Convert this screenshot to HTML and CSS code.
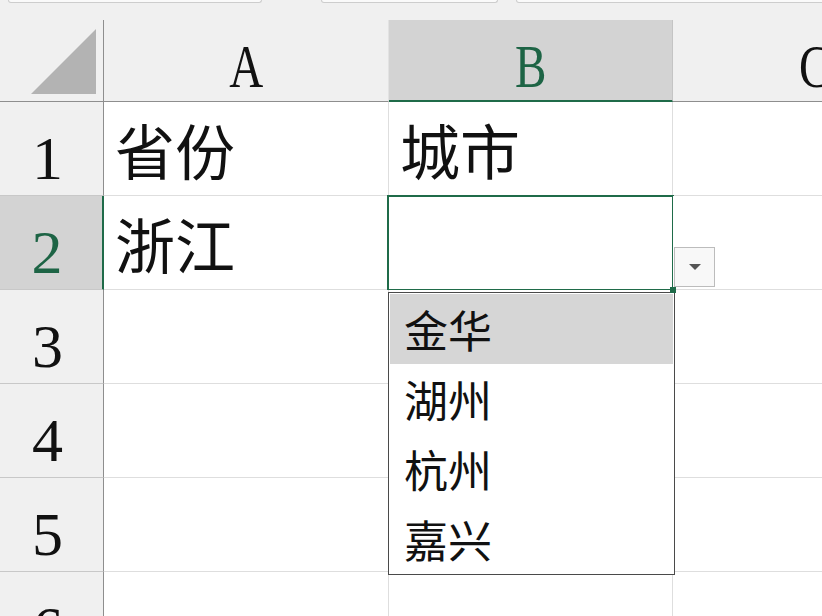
FILE: index.html
```html
<!DOCTYPE html>
<html lang="zh-CN">
<head>
    <meta charset="UTF-8">
    <title>数据验证 下拉列表</title>
    <link rel="stylesheet" href="styles.css">
</head>
<body>
    <div class="toolbar">
        <div class="tool-box box-name"></div>
        <div class="tool-box box-buttons"></div>
        <div class="tool-box box-formula"></div>
    </div>

    <div class="sheet">
        <!-- header row -->
        <div class="corner"><span class="corner-mark"></span></div>
        <div class="col-head"><span class="letter">A</span></div>
        <div class="col-head active"><span class="letter">B</span></div>
        <div class="col-head"><span class="letter">C</span></div>

        <div class="row-head">1</div>
        <div class="cell">省份</div>
        <div class="cell">城市</div>
        <div class="cell"></div>

        <div class="row-head active">2</div>
        <div class="cell">浙江</div>
        <div class="cell selected">
            <span class="fill-handle"></span>
            <button class="drop-btn"><span class="drop-arrow"></span></button>
            <ul class="drop-list">
                <li class="hover">金华</li>
                <li>湖州</li>
                <li>杭州</li>
                <li>嘉兴</li>
            </ul>
        </div>
        <div class="cell"></div>

        <div class="row-head">3</div>
        <div class="cell"></div>
        <div class="cell"></div>
        <div class="cell"></div>

        <div class="row-head">4</div>
        <div class="cell"></div>
        <div class="cell"></div>
        <div class="cell"></div>

        <div class="row-head">5</div>
        <div class="cell"></div>
        <div class="cell"></div>
        <div class="cell"></div>

        <div class="row-head">6</div>
        <div class="cell"></div>
        <div class="cell"></div>
        <div class="cell"></div>
    </div>
</body>
</html>
```

FILE: styles.css
```css
body {
    margin: 0;
    background: #f0f0f0;
    overflow: hidden;
}
.toolbar {
    display: flex;
    height: 20px;
    padding-left: 8px;
}
.tool-box {
    height: 2px;
    background: #fafafa;
    border: 1px solid #cdcdcd;
    border-top: none;
    border-radius: 0 0 6px 6px;
}
.box-name {
    width: 252px;
}
.box-buttons {
    width: 175px;
    margin-left: 59px;
}
.box-formula {
    flex: 1;
    margin-left: 18px;
    margin-right: -10px;
}
.sheet {
    display: grid;
    grid-template-columns: 104px 285px 284px 284px;
    grid-template-rows: 82px repeat(6, 94px);
}
.corner {
    display: flex;
    justify-content: flex-end;
    align-items: flex-end;
    padding: 0 7px 7px 0;
    border-right: 1px solid #8e8e8e;
    border-bottom: 1px solid #8e8e8e;
}
.corner-mark {
    width: 0;
    height: 0;
    border-left: 65px solid transparent;
    border-bottom: 65px solid #b3b3b3;
}
.col-head, .row-head {
    display: flex;
    justify-content: center;
    align-items: center;
    font-family: "Liberation Serif", "Times New Roman", serif;
    font-size: 62px;
    color: #111;
    background: #f0f0f0;
}
.col-head {
    padding-top: 12px;
    border-right: 1px solid #e2e2e2;
    border-bottom: 1px solid #8e8e8e;
}
.col-head .letter {
    display: inline-block;
    transform: scaleX(0.76);
}
.col-head.active {
    background: #d3d3d3;
    color: #1d6445;
    border-right: 1px solid #c4c4c4;
    border-bottom: 2px solid #1f6b49;
}
.row-head {
    padding: 20px 8px 0 0;
    border-right: 1px solid #8e8e8e;
    border-bottom: 1px solid #c8c8c8;
}
.row-head.active {
    background: #d3d3d3;
    color: #1d6445;
    border-right: 2px solid #1f6b49;
}
.cell {
    position: relative;
    display: flex;
    align-items: center;
    padding-left: 11px;
    background: #fff;
    border-right: 1px solid #dedede;
    border-bottom: 1px solid #dedede;
    font-family: "Noto Sans CJK SC", "Noto Sans", sans-serif;
    font-size: 60px;
    color: #111;
}
.cell.selected::after {
    content: "";
    position: absolute;
    top: -1px;
    left: -2px;
    right: -2px;
    bottom: -2px;
    border: 2px solid #1f6b49;
}
.fill-handle {
    position: absolute;
    left: 281px;
    top: 91px;
    width: 6px;
    height: 6px;
    background: #1f6b49;
    z-index: 3;
}
.drop-btn {
    position: absolute;
    left: 285px;
    top: 51px;
    width: 41px;
    height: 40px;
    padding: 0;
    display: flex;
    justify-content: center;
    align-items: center;
    background: #f8f8f8;
    border: 1px solid #bcbcbc;
    z-index: 2;
}
.drop-arrow {
    width: 0;
    height: 0;
    border-left: 6px solid transparent;
    border-right: 6px solid transparent;
    border-top: 6px solid #555;
}
.drop-list {
    position: absolute;
    left: -1px;
    top: 96px;
    width: 287px;
    height: 283px;
    box-sizing: border-box;
    margin: 0;
    padding: 1px;
    list-style: none;
    background: #fff;
    border: 1px solid #4a4a4a;
    z-index: 2;
}
.drop-list li {
    height: 70px;
    display: flex;
    align-items: center;
    padding-left: 14px;
    font-size: 44px;
    color: #111;
}
.drop-list li.hover {
    background: #d6d6d6;
}
```
